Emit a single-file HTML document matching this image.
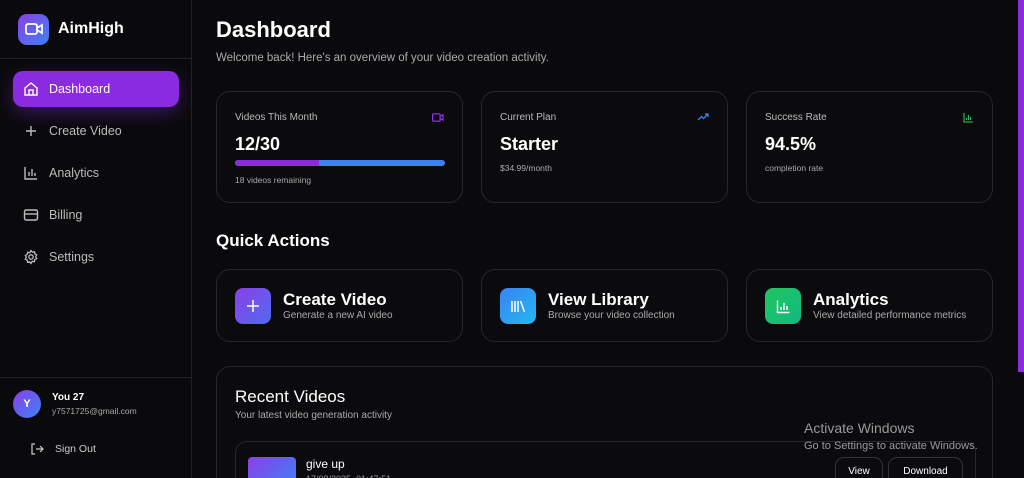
<!DOCTYPE html>
<html style="width:1024px;height:478px;overflow:hidden"><head><style>
*{box-sizing:border-box;margin:0;padding:0}
body{width:1024px;height:478px;overflow:hidden;background:#0a0a0c;font-family:"Liberation Sans",sans-serif;color:#fff;position:relative}
.sb{position:absolute;left:0;top:0;width:192px;height:478px;border-right:1px solid #222226;background:#0a0a0c}
.logo{height:59px;border-bottom:1px solid #222226;display:flex;align-items:center;padding-left:18px}
.lg{width:31px;height:31px;border-radius:9px;background:linear-gradient(135deg,#8b3fe6,#3b82f6);display:flex;align-items:center;justify-content:center}
.lt{font-weight:bold;font-size:16px;margin-left:9px}
.nav{position:absolute;left:13px;width:166px;height:36px;display:flex;align-items:center;padding-left:10px;font-size:12.5px;color:#bbb;border-radius:10px}
.nav svg{margin-right:10px}
.act{background:#8a2be2;color:#fff;box-shadow:0 6px 18px rgba(138,43,226,.35)}
.card{position:absolute;border:1px solid #26262b;border-radius:14px;background:#0b0b0e}
.ct{position:absolute;left:18px;top:20px;font-size:10px;color:#bbb}
.cv{position:absolute;left:18px;top:42px;font-size:18px;font-weight:bold}
.cs{position:absolute;left:18px;font-size:8.5px;color:#aaa}
.qa .ic{position:absolute;left:18px;top:18px;width:36px;height:36px;border-radius:8px;display:flex;align-items:center;justify-content:center}
.qa .h{position:absolute;left:66px;top:20px;font-size:17px;font-weight:bold}
.qa .s{position:absolute;left:66px;top:40px;font-size:10px;color:#aaa}
</style></head><body>
<div class="sb">
 <div class="logo"><div class="lg"><svg width="18" height="14" viewBox="0 0 18 14" fill="none" stroke="#fff" stroke-width="1.8"><rect x="1" y="2" width="11" height="10" rx="2"/><path d="M12 6l5-3v8l-5-3"/></svg></div><div class="lt">AimHigh</div></div>
 <div class="nav act" style="top:71px"><svg width="16" height="16" viewBox="0 0 16 16" fill="none" stroke="#fff" stroke-width="1.4"><path d="M2 7l6-5 6 5v7H2z"/><path d="M6 14V9h4v5"/></svg>Dashboard</div>
 <div class="nav" style="top:113px"><svg width="16" height="16" viewBox="0 0 16 16" stroke="#bbb" stroke-width="1.4"><path d="M8 3v10M3 8h10"/></svg>Create Video</div>
 <div class="nav" style="top:155px"><svg width="16" height="16" viewBox="0 0 16 16" fill="none" stroke="#bbb" stroke-width="1.4"><path d="M2 2v12h12M6 11V7M9 11V4M12 11V8"/></svg>Analytics</div>
 <div class="nav" style="top:197px"><svg width="16" height="16" viewBox="0 0 16 16" fill="none" stroke="#bbb" stroke-width="1.4"><rect x="1.5" y="3" width="13" height="10" rx="1.5"/><path d="M1.5 7h13"/></svg>Billing</div>
 <div class="nav" style="top:239px"><svg width="16" height="16" viewBox="0 0 16 16" fill="none" stroke="#bbb" stroke-width="1.3"><circle cx="8" cy="8" r="2.2"/><path d="M8 1.5l1.3 1.7 2.1-.5.4 2.1 1.9 1-1 1.9 1 1.9-1.9 1-.4 2.1-2.1-.5L8 14.5l-1.3-1.7-2.1.5-.4-2.1-1.9-1 1-1.9-1-1.9 1.9-1 .4-2.1 2.1.5z"/></svg>Settings</div>
 <div style="position:absolute;top:377px;left:0;width:191px;border-top:1px solid #222226"></div>
 <div style="position:absolute;left:13px;top:390px;width:28px;height:28px;border-radius:50%;background:linear-gradient(135deg,#8b3fe6,#3b82f6);font-size:11px;font-weight:bold;display:flex;align-items:center;justify-content:center">Y</div>
 <div style="position:absolute;left:52px;top:392px;font-size:10px;font-weight:bold">You 27</div>
 <div style="position:absolute;left:52px;top:406px;font-size:8.5px;color:#aaa">y7571725@gmail.com</div>
 <div style="position:absolute;left:30px;top:442px;font-size:10.5px;color:#ccc;display:flex;align-items:center"><svg width="14" height="14" viewBox="0 0 14 14" fill="none" stroke="#ccc" stroke-width="1.2" style="margin-right:11px"><path d="M5 2H2v10h3M6 7h7M10 4l3 3-3 3"/></svg>Sign Out</div>
</div>
<div style="position:absolute;left:216px;top:17px;font-size:22px;font-weight:bold">Dashboard</div>
<div style="position:absolute;left:216px;top:52px;font-size:11.5px;color:#aaa">Welcome back! Here's an overview of your video creation activity.</div>

<div class="card" style="left:216px;top:91px;width:247px;height:112px">
 <div class="ct">Videos This Month</div>
 <svg style="position:absolute;right:18px;top:21px" width="12" height="9" viewBox="0 0 12 9" fill="none" stroke="#9333ea" stroke-width="1.2"><rect x=".6" y=".8" width="7.5" height="7.4" rx="1"/><path d="M8 3.5l3-1.7v5.4L8 5.5"/></svg>
 <div class="cv">12/30</div>
 <div style="position:absolute;left:18px;top:68px;width:210px;height:6px;border-radius:3px;background:#3b82f6;overflow:hidden"><div style="width:84px;height:6px;background:#8a2be2"></div></div>
 <div class="cs" style="top:83px">18 videos remaining</div>
</div>
<div class="card" style="left:481px;top:91px;width:247px;height:112px">
 <div class="ct">Current Plan</div>
 <svg style="position:absolute;right:18px;top:21px" width="12" height="8" viewBox="0 0 12 8" fill="none" stroke="#3b82f6" stroke-width="1.3"><path d="M1 7l3.5-3.5 2 2L11 1M8 1h3v3"/></svg>
 <div class="cv">Starter</div>
 <div class="cs" style="top:71px">$34.99/month</div>
</div>
<div class="card" style="left:746px;top:91px;width:247px;height:112px">
 <div class="ct">Success Rate</div>
 <svg style="position:absolute;right:18px;top:20px" width="11" height="11" viewBox="0 0 11 11" fill="none" stroke="#22c55e" stroke-width="1.1"><path d="M1 1v9h9M3.5 8V6M5.5 8V3M7.5 8V5"/></svg>
 <div class="cv">94.5%</div>
 <div class="cs" style="top:71px">completion rate</div>
</div>

<div style="position:absolute;left:216px;top:231px;font-size:17px;font-weight:bold">Quick Actions</div>

<div class="card qa" style="left:216px;top:269px;width:247px;height:73px"><div class="ic" style="background:linear-gradient(135deg,#8b3fe6,#4f6bf0)"><svg width="14" height="14" stroke="#fff" stroke-width="1.5"><path d="M7 1v12M1 7h12"/></svg></div><div class="h">Create Video</div><div class="s">Generate a new AI video</div></div>
<div class="card qa" style="left:481px;top:269px;width:247px;height:73px"><div class="ic" style="background:linear-gradient(135deg,#3b82f6,#22b8f0)"><svg width="16" height="14" stroke="#fff" stroke-width="1.5"><path d="M2 2v11M5 2v11M8 2v11M10.5 2l4 11"/></svg></div><div class="h">View Library</div><div class="s">Browse your video collection</div></div>
<div class="card qa" style="left:746px;top:269px;width:247px;height:73px"><div class="ic" style="background:linear-gradient(135deg,#22c55e,#10b981)"><svg width="15" height="15" fill="none" stroke="#fff" stroke-width="1.4"><path d="M1.5 1.5v12h12M5 11V8M8 11V4M11 11V7"/></svg></div><div class="h">Analytics</div><div class="s">View detailed performance metrics</div></div>

<div class="card" style="left:216px;top:366px;width:777px;height:112px;border-bottom:none;border-radius:14px 14px 0 0;overflow:hidden">
 <div style="position:absolute;left:18px;top:20px;font-size:17px">Recent Videos</div>
 <div style="position:absolute;left:18px;top:43px;font-size:10px;color:#aaa">Your latest video generation activity</div>
 <div style="position:absolute;left:18px;top:74px;width:741px;height:80px;border:1px solid #26262b;border-radius:12px">
  <div style="position:absolute;left:12px;top:15px;width:48px;height:30px;border-radius:4px;background:linear-gradient(135deg,#8b3fe6,#3b82f6)"></div>
  <div style="position:absolute;left:70px;top:15px;font-size:12px">give up</div>
  <div style="position:absolute;left:70px;top:32px;font-size:9px;color:#999">17/08/2025, 01:47:51</div>
  <div style="position:absolute;left:599px;top:15px;width:48px;height:28px;border:1px solid #333;border-radius:9px;font-size:10px;display:flex;align-items:center;justify-content:center">View</div>
  <div style="position:absolute;left:652px;top:15px;width:75px;height:28px;border:1px solid #333;border-radius:9px;font-size:10px;display:flex;align-items:center;justify-content:center">Download</div>
 </div>
</div>
<div style="position:absolute;left:804px;top:420px;font-size:14px;color:#999">Activate Windows</div>
<div style="position:absolute;left:804px;top:440px;font-size:11px;color:#999">Go to Settings to activate Windows.</div>
<div style="position:absolute;left:1018px;top:0;width:6px;height:372px;background:#8a2be2"></div>
</body></html>
